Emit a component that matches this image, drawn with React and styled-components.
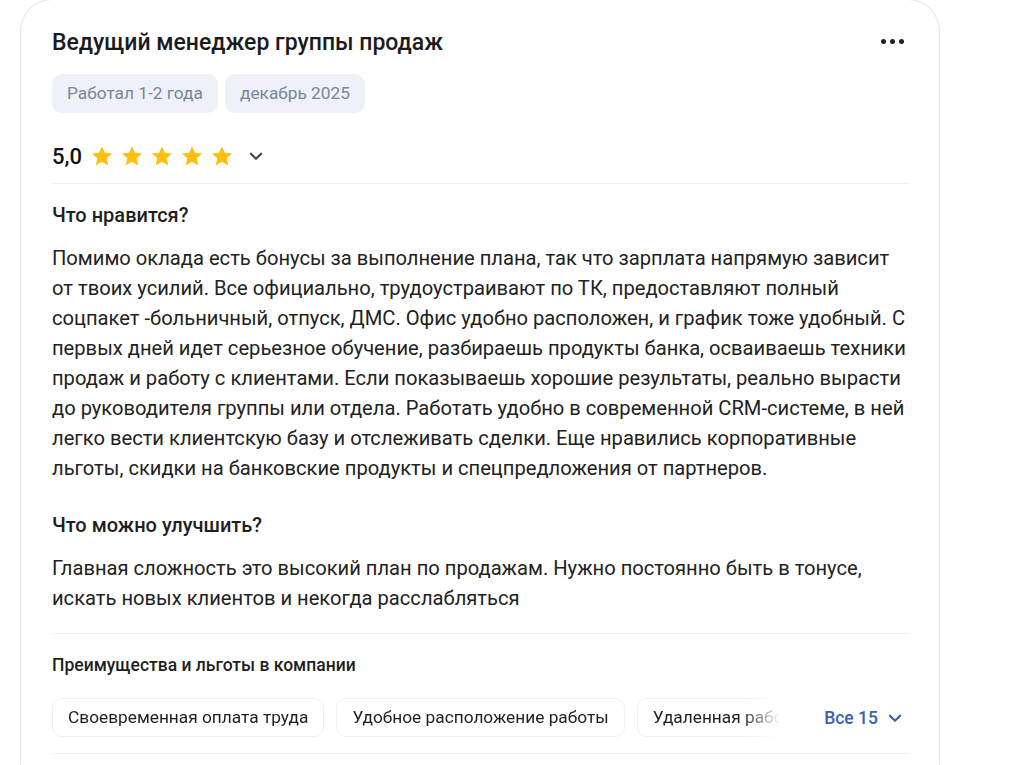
import React from 'react'
import styled, { createGlobalStyle } from 'styled-components'

const GlobalStyle = createGlobalStyle`
  body {
    margin: 0;
    background: #fff;
    font-family: Roboto, "Liberation Sans", Arial, sans-serif;
    color: #1f1f1f;
  }
`

const Page = styled.div`
  padding: 0 77px 0 20px;
  height: 765px;
  overflow: hidden;
`

const Card = styled.div`
  border: 1px solid #dfe3ec;
  border-radius: 32px;
  padding: 29px 30px 40px 31px;
  margin-top: -1px;
  background: #fff;
`

const Header = styled.div`
  display: flex;
  justify-content: space-between;
  align-items: center;
`

const Title = styled.h2`
  margin: 0;
  font-size: 23px;
  line-height: 28px;
  font-weight: 500;
  color: #1b1b1f;
`

const MoreButton = styled.button`
  border: 0;
  background: none;
  padding: 0;
  margin: -3px 5px 0 0;
  display: flex;
  gap: 4px;
  cursor: pointer;
  span {
    width: 5px;
    height: 5px;
    border-radius: 50%;
    background: #1f1f24;
  }
`

const Tags = styled.div`
  display: flex;
  gap: 7px;
  margin-top: 17px;
`

const Tag = styled.span`
  background: #eef1f7;
  color: #7b8597;
  font-size: 17.3px;
  line-height: 39px;
  padding: 0 15px;
  border-radius: 10px;
`

const RatingRow = styled.div`
  display: flex;
  align-items: center;
  height: 32px;
  margin-top: 27px;
  padding-bottom: 11px;
  border-bottom: 1px solid #eef0f4;
`

const Score = styled.span`
  font-size: 22px;
  font-weight: 500;
  color: #111;
  margin-right: 8px;
`

const Stars = styled.div`
  display: flex;
  gap: 6px;
`

const Chevron = styled.svg`
  width: ${p => p.size || 16}px;
  height: ${p => p.size || 16}px;
  margin-left: ${p => p.gap || 0}px;
  flex-shrink: 0;
`

const Section = styled.div`
  margin-top: ${p => p.top}px;
`

const SectionTitle = styled.h3`
  margin: 0;
  font-size: 20px;
  line-height: 30px;
  font-weight: 500;
  color: #1f1f1f;
`

const Body = styled.p`
  margin: 13px 0 0;
  font-size: 20.15px;
  line-height: 30px;
  color: #222;
`

const Benefits = styled.div`
  margin-top: 20px;
  border-top: 1px solid #eef0f4;
  border-bottom: 1px solid #eef0f4;
  padding: 20px 0 16px;
`

const BenefitsTitle = styled.div`
  font-size: 17.5px;
  font-weight: 500;
  line-height: 22px;
  color: #1f1f1f;
`

const ChipsRow = styled.div`
  display: flex;
  align-items: center;
  margin-top: 22px;
`

const ChipsScroller = styled.div`
  display: flex;
  gap: 12px;
  width: 728px;
  overflow: hidden;
  white-space: nowrap;
  -webkit-mask-image: linear-gradient(to right, #000 690px, transparent 728px);
  mask-image: linear-gradient(to right, #000 690px, transparent 728px);
`

const Chip = styled.span`
  flex-shrink: 0;
  border: 1px solid #eceff5;
  border-radius: 10px;
  padding: 0 15px;
  line-height: 37px;
  font-size: 17.3px;
  color: #1f1f1f;
`

const AllButton = styled.button`
  margin: 0 5px 0 auto;
  border: 0;
  background: none;
  padding: 0;
  display: flex;
  align-items: center;
  font-family: inherit;
  font-size: 17.5px;
  font-weight: 500;
  color: #3a62ad;
  cursor: pointer;
`

const Star = () => (
  <svg width="24" height="24" viewBox="0 0 24 24">
    <path fill="#ffbf0f" d="M12 2.2l2.9 6.6 7.2.7-5.4 4.8 1.6 7.1L12 17.7l-6.3 3.7 1.6-7.1L1.9 9.5l7.2-.7z" />
  </svg>
)

const ChevronDown = ({ color, size, gap }) => (
  <Chevron viewBox="0 0 16 16" size={size} gap={gap}>
    <path d="M3.5 6l4.5 4.5L12.5 6" fill="none" stroke={color} strokeWidth="2" strokeLinecap="round" strokeLinejoin="round" />
  </Chevron>
)

const likes = 'Помимо оклада есть бонусы за выполнение плана, так что зарплата напрямую зависит от твоих усилий. Все официально, трудоустраивают по ТК, предоставляют полный соцпакет -больничный, отпуск, ДМС. Офис удобно расположен, и график тоже удобный. С первых дней идет серьезное обучение, разбираешь продукты банка, осваиваешь техники продаж и работу с клиентами. Если показываешь хорошие результаты, реально вырасти до руководителя группы или отдела. Работать удобно в современной CRM-системе, в ней легко вести клиентскую базу и отслеживать сделки. Еще нравились корпоративные льготы, скидки на банковские продукты и спецпредложения от партнеров.'

const improve = 'Главная сложность это высокий план по продажам. Нужно постоянно быть в тонусе, искать новых клиентов и некогда расслабляться'

const benefits = ['Своевременная оплата труда', 'Удобное расположение работы', 'Удаленная работа', 'ДМС']

export default function App() {
  return <>
    <GlobalStyle />
    <Page>
      <Card>
        <Header>
          <Title>Ведущий менеджер группы продаж</Title>
          <MoreButton aria-label="Ещё"><span /><span /><span /></MoreButton>
        </Header>

        <Tags>
          <Tag>Работал 1-2 года</Tag>
          <Tag>декабрь 2025</Tag>
        </Tags>

        <RatingRow>
          <Score>5,0</Score>
          <Stars>
            { [0, 1, 2, 3, 4].map(i => <Star key={i} />) }
          </Stars>
          <ChevronDown color="#44474f" size={18} gap={13} />
        </RatingRow>

        <Section top={16}>
          <SectionTitle>Что нравится?</SectionTitle>
          <Body>{ likes }</Body>
        </Section>

        <Section top={27}>
          <SectionTitle>Что можно улучшить?</SectionTitle>
          <Body>{ improve }</Body>
        </Section>

        <Benefits>
          <BenefitsTitle>Преимущества и льготы в компании</BenefitsTitle>
          <ChipsRow>
            <ChipsScroller>
              { benefits.map(b => <Chip key={b}>{ b }</Chip>) }
            </ChipsScroller>
            <AllButton>
              Все 15
              <ChevronDown color="#3a62ad" size={18} gap={8} />
            </AllButton>
          </ChipsRow>
        </Benefits>
      </Card>
    </Page>
  </>
}
